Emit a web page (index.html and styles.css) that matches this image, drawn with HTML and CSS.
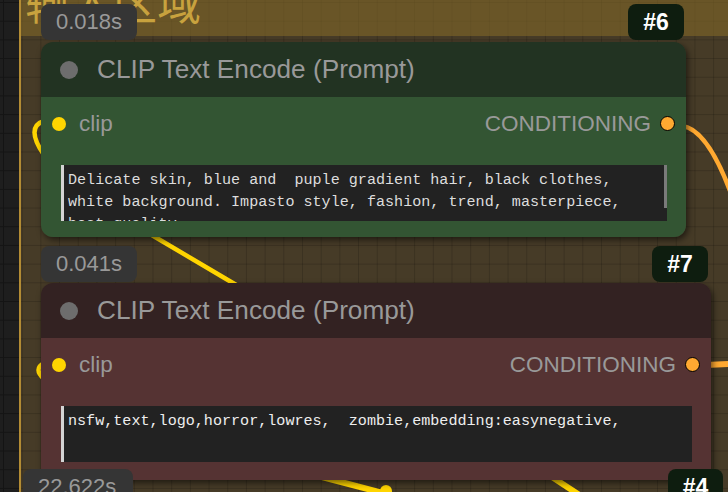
FILE: index.html
```html
<html>
    <head>
        <meta charset="utf-8">
        <meta name="viewport" content="width=device-width, initial-scale=1">
        <title>ComfyUI: prompt nodes</title>
        <link rel="stylesheet" href="styles.css">
    </head>
    <body>
        <div class="canvas">
            <div class="group">
                <div class="group-title"><span>输入区域</span></div>
            </div>

            <!-- links between the nodes -->
            <svg class="wires" width="728" height="492" viewBox="0 0 728 492">
                <path class="link yellow" d="M44 121 Q25 127 44 155" />
                <path class="link yellow" d="M44 363 Q33 369 44 379" />
                <path class="link yellow" d="M150 234 L238 286" />
                <path class="link yellow thick" d="M322 477 L398 497" />
                <circle class="dot-yellow" cx="386" cy="491" r="6" />
                <path class="link yellow thick" d="M552 477 L584 498" />
                <path class="link orange" d="M682 126 C700 128 716 152 732 196" />
                <path class="link orange thick" d="M706 365 L730 364" />
            </svg>

            <div class="node node-green node-6">
                <div class="badge-time">0.018s</div>
                <div class="badge-id">#6</div>
                <div class="node-title"><span class="title-dot"></span>CLIP Text Encode (Prompt)</div>
                <div class="node-body">
                    <div class="slot-row">
                        <span class="slot"><i class="pin pin-clip"></i>clip</span>
                        <span class="slot">CONDITIONING<i class="pin pin-cond"></i></span>
                    </div>
                    <div class="prompt scroll">Delicate skin, blue and  puple gradient hair, black clothes,
white background. Impasto style, fashion, trend, masterpiece,
best quality</div>
                </div>
            </div>

            <div class="node node-red node-7">
                <div class="badge-time">0.041s</div>
                <div class="badge-id">#7</div>
                <div class="node-title"><span class="title-dot"></span>CLIP Text Encode (Prompt)</div>
                <div class="node-body">
                    <div class="slot-row">
                        <span class="slot"><i class="pin pin-clip"></i>clip</span>
                        <span class="slot">CONDITIONING<i class="pin pin-cond"></i></span>
                    </div>
                    <div class="prompt">nsfw,text,logo,horror,lowres,  zombie,embedding:easynegative,</div>
                </div>
            </div>

            <!-- next node, only its badges are on screen -->
            <div class="node-4">
                <div class="badge-time">22.622s</div>
                <div class="badge-id">#4</div>
            </div>
        </div>
    </body>
</html>
```

FILE: styles.css
```css
/* litegraph style canvas */
body {
    margin: 0;
    background: #1e1e1e;
    font-family: "Liberation Sans", Arial, sans-serif;
}
.canvas {
    position: relative;
    width: 728px;
    height: 492px;
    overflow: hidden;
    background-color: #1e1e1e;
    background-image:
        linear-gradient(90deg, #141414 1px, transparent 1px),
        linear-gradient(#141414 1px, transparent 1px);
    background-size: 18.7px 18.7px;
    background-position: 3px 2px;
}
.group {
    position: absolute;
    left: 19px;
    top: 0;
    right: -10px;
    bottom: -10px;
    border-left: 2px solid #b38c34;
    background-color: #463b27;
    background-image:
        linear-gradient(90deg, rgba(0,0,0,0.16) 1px, transparent 1px),
        linear-gradient(rgba(0,0,0,0.16) 1px, transparent 1px);
    background-size: 18.7px 18.7px;
    background-position: -18px 2px;
}
.group-title {
    height: 36px;
    padding-left: 4px;
    background: rgba(135, 108, 40, 0.55);
    color: #c8a23e;
    font-family: "Noto Sans CJK SC", sans-serif;
    font-size: 44px;
    overflow: hidden;
}
.group-title span {
    display: block;
    line-height: 44px;
    margin-top: -21px;
}
.wires {
    position: absolute;
    left: 0;
    top: 0;
}
.link {
    fill: none;
    stroke-width: 4.5;
    stroke-linecap: round;
}
.link.thick {
    stroke-width: 6;
}
.yellow {
    stroke: #ffd500;
}
.orange {
    stroke: #ffa931;
}
.dot-yellow {
    fill: #ffd500;
}

/* nodes */
.node {
    position: absolute;
    border-radius: 12px;
    box-shadow: 2px 3px 6px rgba(0,0,0,0.55);
    display: flex;
    flex-direction: column;
}
.node-6 {
    left: 41px;
    top: 42px;
    width: 645px;
    height: 195px;
}
.node-7 {
    left: 41px;
    top: 283px;
    width: 670px;
    height: 197px;
}
.node-green .node-title { background: #223322; }
.node-green .node-body  { background: #335533; }
.node-red .node-title   { background: #332222; }
.node-red .node-body    { background: #553333; }

.node-title {
    height: 55px;
    flex: none;
    display: flex;
    align-items: center;
    padding-left: 19px;
    border-radius: 12px 12px 0 0;
    color: #999;
    font-size: 26.2px;
}
.title-dot {
    width: 18px;
    height: 18px;
    border-radius: 50%;
    background: #6d6d6d;
    margin-right: 19px;
}
.node-body {
    flex: 1;
    border-radius: 0 0 12px 12px;
    padding: 12px 19px 0 20px;
}
.slot-row {
    height: 29px;
    display: flex;
    justify-content: space-between;
    align-items: center;
    margin: 0 -8px 0 -9px;
    color: #999;
    font-size: 22.5px;
}
.slot {
    display: flex;
    align-items: center;
}
.pin {
    display: block;
    border-radius: 50%;
}
.pin-clip {
    width: 14px;
    height: 14px;
    background: #ffd500;
    margin-right: 13px;
}
.pin-cond {
    width: 13px;
    height: 13px;
    background: #ffa931;
    border: 1.5px solid #000;
    margin-left: 9px;
}
.prompt {
    position: relative;
    margin-top: 27px;
    height: 56px;
    box-sizing: border-box;
    padding: 4px 0 0 4px;
    background: #222;
    border-left: 3px solid #d4d4d4;
    color: #ddd;
    font-family: "Liberation Mono", "Courier New", monospace;
    font-size: 15.1px;
    line-height: 22px;
    white-space: pre;
    overflow: hidden;
}
.node-red .prompt {
    color: #eee;
}
.prompt.scroll::after {
    content: "";
    position: absolute;
    right: 0;
    top: 0;
    width: 3px;
    height: 43px;
    background: #7a7a7a;
}

/* badges above the nodes */
.badge-time, .badge-id {
    position: absolute;
    height: 36px;
    border-radius: 8px;
    display: flex;
    align-items: center;
    font-size: 22px;
}
.badge-time {
    left: 0;
    top: -38px;
    width: 96px;
    box-sizing: border-box;
    padding-left: 15px;
    background: #353535;
    color: #999;
}
.badge-id {
    top: -38px;
    width: 56px;
    justify-content: center;
    background: #0e1d0f;
    color: #fff;
    font-weight: bold;
    font-size: 23px;
}
.node-6 .badge-id { right: 2px; }
.node-7 .badge-id { right: 3px; top: -37px; }
.node-7 .badge-time { top: -37px; }

.node-4 {
    position: absolute;
    left: 0;
    top: 507px;
    width: 728px;
}
.node-4 .badge-time {
    left: 23px;
    width: 110px;
}
.node-4 .badge-id {
    left: 668px;
    width: 55px;
}
```
